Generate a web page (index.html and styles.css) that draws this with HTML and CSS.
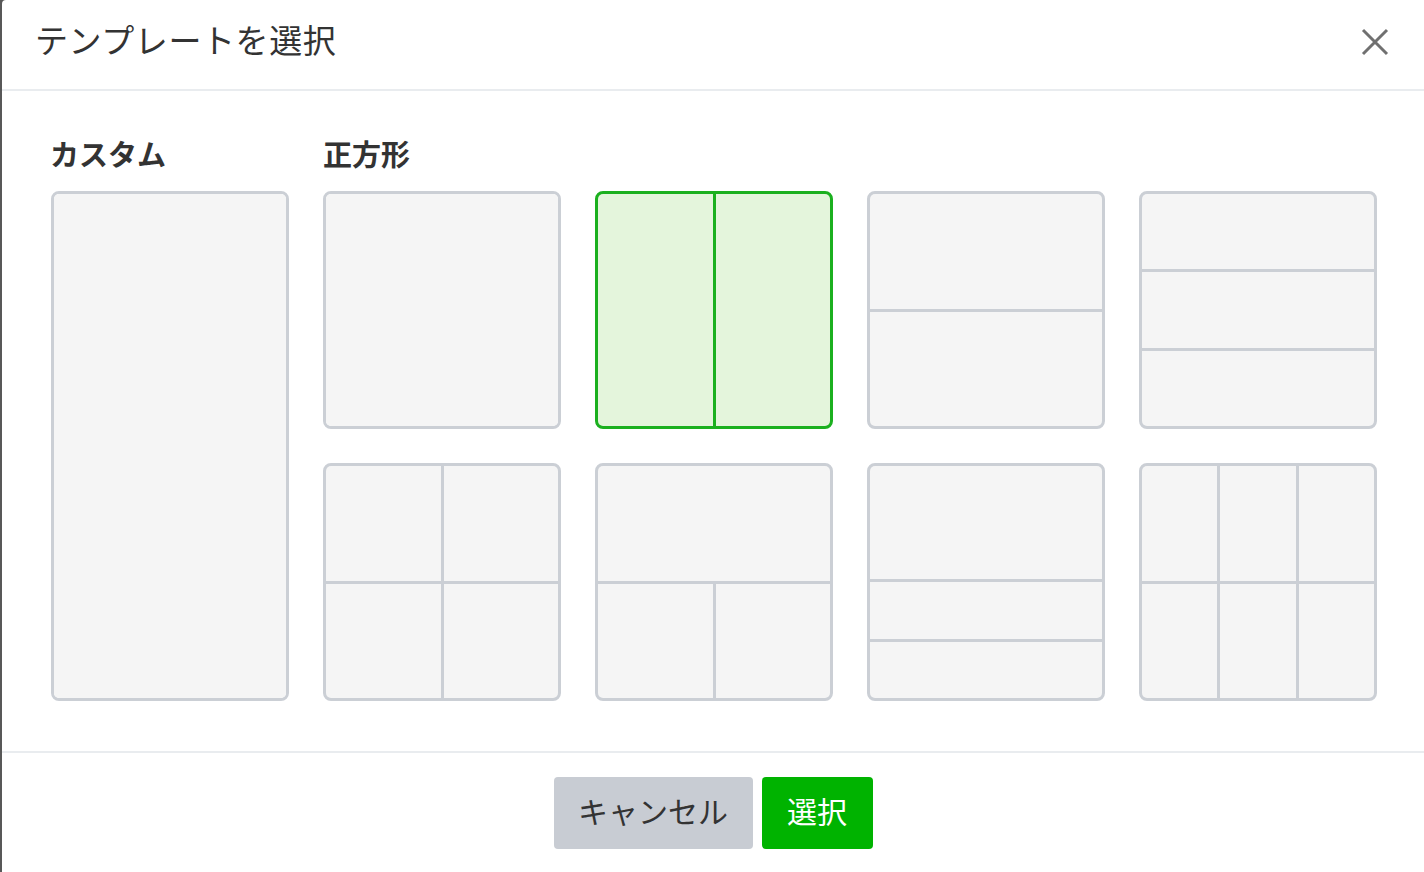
FILE: index.html
```html
<!DOCTYPE html>
<html lang="ja">
<head>
<meta charset="utf-8">
<title>テンプレートを選択</title>
<link rel="stylesheet" href="styles.css">
</head>
<body>
<div class="modal">
  <header class="modal-header">
    <h1 class="modal-title">テンプレートを選択</h1>
    <button class="close-btn" aria-label="閉じる">
      <svg width="28" height="28" viewBox="0 0 28 28"><path d="M2 2 L26 26 M26 2 L2 26" stroke="#707070" stroke-width="3" fill="none"/></svg>
    </button>
  </header>
  <main class="modal-body">
    <section class="group custom">
      <h2 class="group-label">カスタム</h2>
      <div class="card tall"><div class="cell"></div></div>
    </section>
    <section class="group square">
      <h2 class="group-label">正方形</h2>
      <div class="grid">
        <div class="card t-1"><div class="cell"></div></div>
        <div class="card t-2col selected"><div class="cell"></div><div class="cell"></div></div>
        <div class="card t-2row"><div class="cell"></div><div class="cell"></div></div>
        <div class="card t-3row"><div class="cell"></div><div class="cell"></div><div class="cell"></div></div>
        <div class="card t-2x2"><div class="cell"></div><div class="cell"></div><div class="cell"></div><div class="cell"></div></div>
        <div class="card t-top2"><div class="cell full"></div><div class="cell"></div><div class="cell"></div></div>
        <div class="card t-half3"><div class="cell"></div><div class="cell"></div><div class="cell"></div></div>
        <div class="card t-3x2"><div class="cell"></div><div class="cell"></div><div class="cell"></div><div class="cell"></div><div class="cell"></div><div class="cell"></div></div>
      </div>
    </section>
  </main>
  <footer class="modal-footer">
    <button class="btn btn-cancel">キャンセル</button>
    <button class="btn btn-primary">選択</button>
  </footer>
</div>
</body>
</html>
```
FILE: styles.css
```css
* { box-sizing: border-box; }
html, body { margin: 0; padding: 0; height: 100%; }
body {
  background: #585858;
  font-family: "Noto Sans CJK JP", "Noto Sans", sans-serif;
  color: #333;
  overflow: hidden;
}
.modal {
  margin-left: 2px;
  height: 872px;
  background: #fff;
  border-top-left-radius: 4px;
  display: flex;
  flex-direction: column;
}
.modal-header {
  height: 91px;
  border-bottom: 2px solid #e9ecef;
  display: flex;
  align-items: center;
  justify-content: space-between;
  padding: 0 34px 0 33px;
}
.modal-title {
  margin: 0;
  font-size: 33px;
  letter-spacing: 0.6px;
  font-weight: 400;
  line-height: 1;
  color: #333;
  position: relative;
  top: -5px;
}
.close-btn {
  background: none;
  border: 0;
  padding: 0;
  width: 28px;
  height: 28px;
  display: flex;
  cursor: pointer;
  position: relative;
  top: -3px;
  left: -1px;
}
.modal-body {
  height: 662px;
  border-bottom: 2px solid #e9ecef;
  display: flex;
  gap: 34px;
  padding: 41px 0 0 49px;
}
.group-label {
  margin: 0 0 17px;
  font-size: 29px;
  font-weight: 700;
  line-height: 42px;
  color: #333;
}
.custom .group-label { margin-left: -1px; }
.grid {
  display: grid;
  grid-template-columns: repeat(4, 238px);
  grid-auto-rows: 238px;
  gap: 34px;
}
.card {
  width: 238px;
  height: 238px;
  border: 3px solid #cbcfd5;
  border-radius: 8px;
  background: #cbcfd5;
  overflow: hidden;
  display: grid;
  gap: 3px;
}
.card.tall { height: 510px; }
.cell { background: #f5f5f5; }
.card.selected {
  border-color: #1bb01f;
  background: #1bb01f;
}
.card.selected .cell { background: #e4f5dc; }
.t-2col { grid-template-columns: 1fr 1fr; }
.t-2row { grid-template-rows: 1fr 1fr; }
.t-3row { grid-template-rows: 1fr 1fr 1fr; }
.t-2x2 { grid-template-columns: 1fr 1fr; grid-template-rows: 1fr 1fr; }
.t-top2 { grid-template-columns: 1fr 1fr; grid-template-rows: 1fr 1fr; }
.t-top2 .full { grid-column: 1 / 3; }
.t-half3 { grid-template-rows: 2fr 1fr 1fr; }
.t-3x2 { grid-template-columns: 1fr 1fr 1fr; grid-template-rows: 1fr 1fr; }
.modal-footer {
  flex: 1;
  display: flex;
  justify-content: center;
  align-items: flex-start;
  gap: 9px;
  padding-top: 24px;
}
.btn {
  height: 72px;
  border: 0;
  border-radius: 4px;
  font-family: "Noto Sans CJK JP", "Noto Sans", sans-serif;
  font-size: 30px;
  line-height: 1;
  padding: 0 0 6px;
  white-space: nowrap;
  cursor: pointer;
}
.btn-cancel {
  width: 199px;
  background: #c8ccd3;
  color: #333;
}
.btn-primary {
  width: 111px;
  background: #00b300;
  color: #fff;
}
```
